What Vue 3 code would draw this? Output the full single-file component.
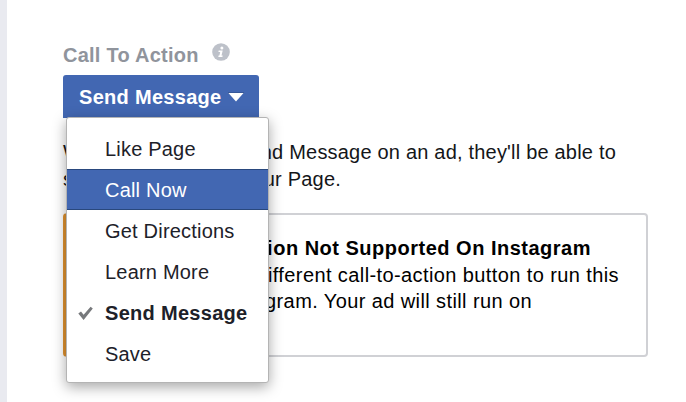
<template>
  <div class="page">
    <div class="panel">
      <div class="label-row">
        <span class="label">Call To Action</span>
        <svg class="info" viewBox="0 0 18 18">
          <circle cx="9" cy="9" r="8.8" fill="#bdc1c9" />
          <circle cx="9.9" cy="4.9" r="1.5" fill="#fff" />
          <path d="M6.7 7.4h4l-1.2 5h1.2l-.3 1.5H6.3l.3-1.5h.8l.8-3.5H6.4z" fill="#fff" />
        </svg>
      </div>

      <div class="dropdown">
        <button class="trigger" type="button">
          <span>{{ selected }}</span>
          <svg class="caret" viewBox="0 0 16 10">
            <path d="M0 0h16v2H0z" fill="#365899" />
            <path d="M.4 1h15.2L8 9.6z" fill="#fff" />
          </svg>
        </button>

        <ul class="menu">
          <li
            v-for="item in options"
            :key="item"
            class="option"
            :class="{ highlighted: item === highlighted, selected: item === selected }"
          >
            <svg v-if="item === selected" class="check" viewBox="0 0 16 15">
              <path d="M.3 7.6 3 5.4l2.6 3.4L12.6.8l2.2 1.7L5.6 14z" fill="#77797c" />
            </svg>
            {{ item }}
          </li>
        </ul>
      </div>

      <div class="description">
        <p class="line first"><span>When people tap</span><span>Send Message on an ad, they'll be able to</span></p>
        <p class="line second"><span>send a message</span><span>to your Page.</span></p>
      </div>

      <div class="notice">
        <p class="line title"><span>Call To Action Not Supported On Instagram</span></p>
        <p class="line body-one"><span>Choose a different call-to-action button to run this</span></p>
        <p class="line body-two"><span>ad on Instagram. Your ad will still run on</span></p>
      </div>
    </div>
  </div>
</template>

<script setup>
import { ref } from 'vue';

const options = ['Like Page', 'Call Now', 'Get Directions', 'Learn More', 'Send Message', 'Save'];

const selected = ref('Send Message');
const highlighted = ref('Call Now');
</script>

<style>
body {
  margin: 0;
  background: #fff;
}
</style>

<style scoped>
.page {
  box-sizing: border-box;
  width: 686px;
  height: 402px;
  overflow: hidden;
  border-left: 7px solid #e9eaf0;
  background: #fff;
  font-family: "Liberation Sans", Arial, Helvetica, sans-serif;
  font-size: 20px;
  color: #141619;
}

.panel {
  padding: 42px 38px 0 56px;
}

.label-row {
  display: flex;
  height: 33px;
}

.label {
  line-height: 26px;
  font-weight: bold;
  letter-spacing: 0.25px;
  color: #90949c;
}

.info {
  width: 18px;
  height: 18px;
  margin: 1px 0 0 13px;
}

.dropdown {
  position: relative;
  width: 196px;
}

.trigger {
  display: flex;
  align-items: center;
  box-sizing: border-box;
  width: 196px;
  height: 43px;
  padding: 1px 0 0 16px;
  border: 0;
  border-radius: 3px 3px 0 0;
  background: #4267b2;
  color: #fff;
  font: inherit;
  font-weight: bold;
  letter-spacing: 0.3px;
  white-space: nowrap;
}

.caret {
  width: 16px;
  height: 10px;
  margin-left: 6px;
}

.menu {
  position: absolute;
  z-index: 1;
  top: 42px;
  left: 3px;
  box-sizing: border-box;
  width: 203px;
  height: 266px;
  margin: 0;
  padding: 10px 0 0;
  border: 1px solid #b4b4b4;
  border-radius: 3px;
  background: #fff;
  box-shadow: 0 4px 14px rgba(0, 0, 0, 0.35);
  list-style: none;
}

.option {
  position: relative;
  box-sizing: border-box;
  height: 41px;
  padding-left: 38px;
  line-height: 42px;
  letter-spacing: 0.2px;
  color: #1d2129;
}

.option.highlighted {
  border: solid #29487d;
  border-width: 1px 0;
  background: #4267b2;
  line-height: 40px;
  color: #fff;
}

.option.selected {
  font-weight: bold;
  letter-spacing: 0.3px;
}

.check {
  position: absolute;
  top: 14px;
  left: 11px;
  width: 16px;
  height: 15px;
}

.description {
  padding-top: 21px;
}

.line {
  display: flex;
  margin: 0;
  line-height: 26.5px;
  white-space: nowrap;
}

.description .line {
  justify-content: space-between;
  letter-spacing: 0.2px;
}

.first {
  width: 553px;
}

.second {
  width: 278px;
}

.notice {
  box-sizing: border-box;
  width: 585px;
  height: 144px;
  margin-top: 21px;
  padding-top: 20px;
  border: 2px solid #d0d1d5;
  border-left: 10px solid #e0922f;
  border-radius: 4px;
  color: #000;
}

.notice .line {
  justify-content: flex-end;
  letter-spacing: 0.4px;
}

.notice .title {
  width: 518px;
  font-weight: bold;
  letter-spacing: 0.5px;
}

.body-one {
  width: 546px;
}

.body-two {
  width: 459px;
}
</style>
